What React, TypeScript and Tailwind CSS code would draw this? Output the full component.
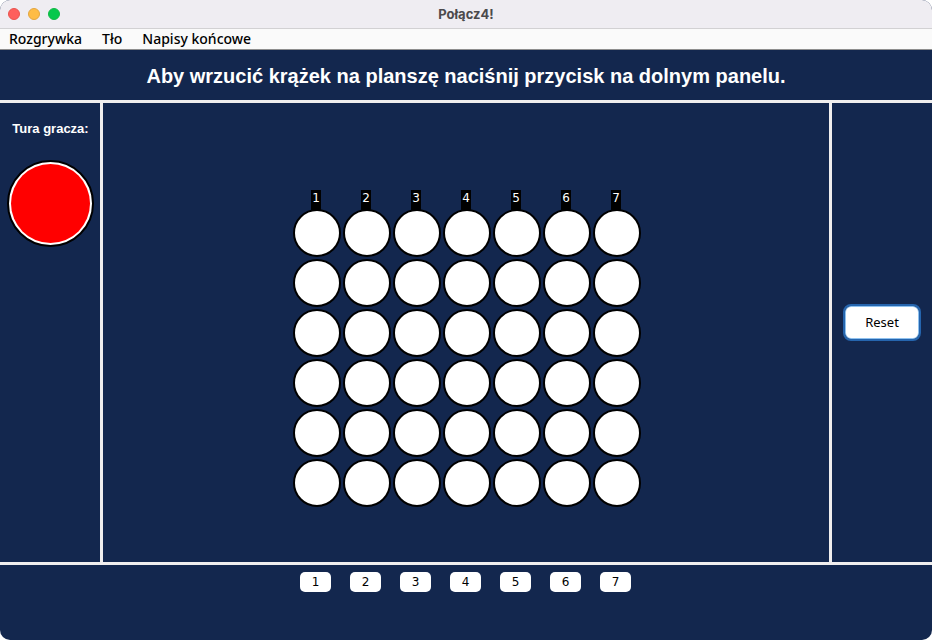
const COLUMNS = [1, 2, 3, 4, 5, 6, 7];
const ROWS = [1, 2, 3, 4, 5, 6];

function TitleBar() {
  return (
    <header className="grid h-7 grid-cols-3 items-center bg-[#efedf2] px-2">
      <div className="flex gap-2">
        <button type="button" aria-label="Zamknij" className="size-3 rounded-full border border-[#e9544f] bg-[#fe5f5c]" />
        <button type="button" aria-label="Minimalizuj" className="size-3 rounded-full border border-[#e3a640] bg-[#febc45]" />
        <button type="button" aria-label="Powiększ" className="size-3 rounded-full border border-[#13b945] bg-[#05c84b]" />
      </div>
      <h1 className="text-center font-['Inter',sans-serif] text-[13px] leading-5 font-bold text-[#4b4a4c]">Połącz4!</h1>
    </header>
  );
}

function MenuBar() {
  return (
    <nav className="flex h-[22px] items-center gap-5 border-t border-b border-t-[#d2d1d3] border-b-[#8e8e8e] bg-[#fafafa] px-[9px] text-sm leading-5 font-medium text-black">
      <button type="button">Rozgrywka</button>
      <button type="button">Tło</button>
      <button type="button">Napisy końcowe</button>
    </nav>
  );
}

function Board() {
  return (
    <div className="grid grid-cols-7 gap-x-0.5 pl-0.5">
      {COLUMNS.map((column) => (
        <div key={column} className="flex flex-col items-center">
          <span className="mr-0.5 -mb-1 h-[23px] w-2.5 bg-black text-center font-['DejaVu_Sans',sans-serif] text-xs leading-4 text-white">
            {column}
          </span>
          <div className="flex flex-col gap-0.5">
            {ROWS.map((row) => (
              <div key={row} className="size-12 rounded-full border-2 border-black bg-white" />
            ))}
          </div>
        </div>
      ))}
    </div>
  );
}

export default function App() {
  return (
    <div className="min-h-screen bg-white">
      <div className="flex min-h-screen flex-col overflow-hidden rounded-[10px] bg-[#13274e] font-['Noto_Sans','Open_Sans',sans-serif]">
        <TitleBar />
        <MenuBar />
        <div className="flex h-[53px] items-center justify-center border-b-3 border-[#f0eeee] pt-0.5">
          <p className="font-['Liberation_Sans',Arial,sans-serif] text-xl leading-6 font-bold text-white">
            Aby wrzucić krążek na planszę naciśnij przycisk na dolnym panelu.
          </p>
        </div>
        <main className="flex grow">
          <aside className="flex w-[103px] flex-col items-center gap-[21px] border-r-3 border-[#f0eeee] pt-4 pl-px">
            <p className="font-['Liberation_Sans',Arial,sans-serif] text-[13px] leading-5 font-bold text-white">Tura gracza:</p>
            <div className="size-[87px] rounded-full border-2 border-black bg-white p-0.5">
              <div className="size-full rounded-full bg-[#ff0000]" />
            </div>
          </aside>
          <section className="flex grow items-center justify-center pt-8">
            <Board />
          </section>
          <aside className="flex w-[103px] justify-center border-l-3 border-[#f0eeee] pt-[203px]">
            <button type="button" className="h-[33px] w-[74px] rounded-md border border-[#8fc1ee] bg-white pb-0.5 text-[13px] leading-5 text-black outline-2 outline-[#2565ae]">
              Reset
            </button>
          </aside>
        </main>
        <footer className="flex h-[78px] items-start justify-center gap-[19px] border-t-3 border-[#f0eeee] pt-[7px] pr-px">
          {COLUMNS.map((column) => (
            <button
              key={column}
              type="button"
              className="h-5 w-[31px] rounded-[5px] bg-white font-['DejaVu_Sans',sans-serif] text-xs leading-5 text-black"
            >
              {column}
            </button>
          ))}
        </footer>
      </div>
    </div>
  );
}
